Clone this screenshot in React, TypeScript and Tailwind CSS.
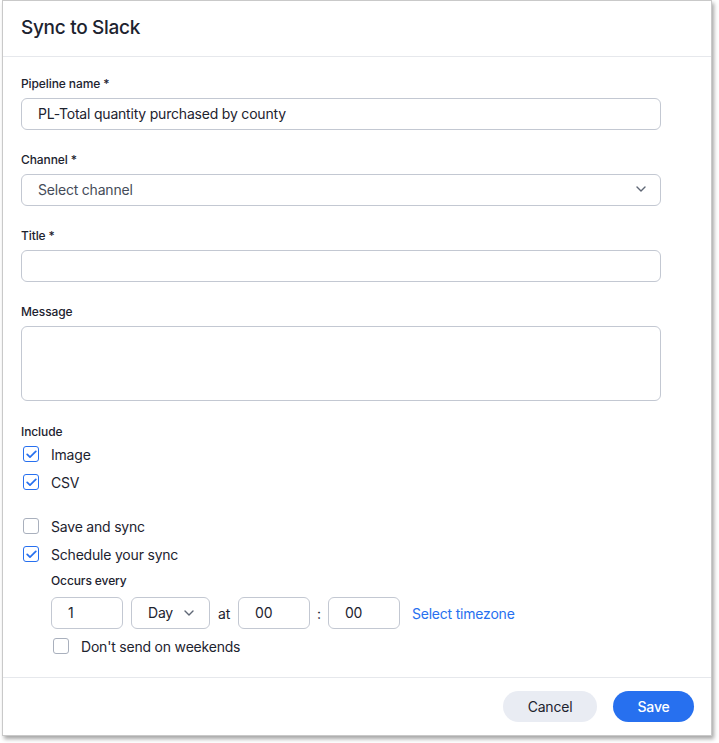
import React from "react";

const font = { fontFamily: "Inter, 'Noto Sans', sans-serif" };

function Check({ checked }: { checked: boolean }) {
  return checked ? (
    <div className="w-4 h-4 rounded-[3px] border-[1.5px] border-[#2770ef] flex items-center justify-center bg-white">
      <svg width="11" height="9" viewBox="0 0 11 9" fill="none">
        <path d="M1.2 4.4 L4 7.2 L9.8 1.4" stroke="#2770ef" strokeWidth="1.7" strokeLinecap="round" strokeLinejoin="round" />
      </svg>
    </div>
  ) : (
    <div className="w-4 h-4 rounded-[3px] border border-[#a9b0bd] bg-white" />
  );
}

function Chevron() {
  return (
    <svg width="10" height="6" viewBox="0 0 10 6" fill="none">
      <path d="M1 1 L5 5 L9 1" stroke="#5f6775" strokeWidth="1.4" strokeLinecap="round" strokeLinejoin="round" />
    </svg>
  );
}

function Label({ children }: { children: React.ReactNode }) {
  return <div className="text-[12px] leading-4 font-medium text-[#1d232f] mb-[6px] tracking-[-0.1px]">{children}</div>;
}

const txt = "text-[14px] tracking-[-0.2px] text-[#1d232f]";
const boxCls = "w-[640px] h-8 rounded-[6px] border border-[#c3c8d2] bg-white flex items-center px-4 pb-[2px] " + txt;

export default function App() {
  return (
    <div className="bg-white w-[719px] h-[743px]" style={font}>
      <div className="ml-[2px] w-[710px] h-[736px] bg-white border border-[#c9c9c9] shadow-[2px_3px_4px_rgba(0,0,0,0.35)] flex flex-col">
        <div className="h-[56px] border-b border-[#e6e8ec] flex items-center pl-[18px]">
          <h1 className="text-[19px] font-medium text-[#1d232f] tracking-[-0.3px]">Sync to Slack</h1>
        </div>
        <div className="flex-1 pl-[18px] pt-[19px]">
          <div>
            <Label>Pipeline name *</Label>
            <div className={boxCls}>PL-Total quantity purchased by county</div>
          </div>
          <div className="mt-[22px]">
            <Label>Channel *</Label>
            <div className={boxCls + " justify-between"}>
              <span className="text-[#454c59]">Select channel</span>
              <span className="mr-[-2px]"><Chevron /></span>
            </div>
          </div>
          <div className="mt-[22px]">
            <Label>Title *</Label>
            <div className={boxCls}></div>
          </div>
          <div className="mt-[22px]">
            <Label>Message</Label>
            <div className="w-[640px] h-[75px] rounded-[6px] border border-[#c3c8d2] bg-white"></div>
          </div>
          <div className="mt-[23px]">
            <div className="text-[12px] leading-4 font-medium text-[#1d232f] tracking-[-0.1px]">Include</div>
            <div className="mt-[6px] flex flex-col gap-3 pl-[2px]">
              <div className="flex items-center gap-3 h-4">
                <Check checked />
                <span className={txt}>Image</span>
              </div>
              <div className="flex items-center gap-3 h-4">
                <Check checked />
                <span className={txt}>CSV</span>
              </div>
            </div>
          </div>
          <div className="mt-7 flex flex-col gap-3 pl-[2px]">
            <div className="flex items-center gap-3 h-4">
              <Check checked={false} />
              <span className={txt}>Save and sync</span>
            </div>
            <div className="flex items-center gap-3 h-4">
              <Check checked />
              <span className={txt}>Schedule your sync</span>
            </div>
          </div>
          <div className="pl-[30px] mt-[11px]">
            <div className="text-[12px] leading-4 font-medium text-[#1d232f] tracking-[-0.1px]">Occurs every</div>
            <div className={"mt-[8px] flex items-center " + txt}>
              <div className="w-[72px] h-8 rounded-[6px] border border-[#c3c8d2] flex items-center pl-4 pb-[1px]">1</div>
              <div className="ml-2 w-[79px] h-8 rounded-[6px] border border-[#c3c8d2] flex items-center pl-4 gap-[11px] pb-[1px]">
                <span>Day</span>
                <Chevron />
              </div>
              <span className="ml-2">at</span>
              <div className="ml-[8px] w-[72px] h-8 rounded-[6px] border border-[#c3c8d2] flex items-center pl-4 pb-[1px]">00</div>
              <span className="ml-[7px]">:</span>
              <div className="ml-[7px] w-[72px] h-8 rounded-[6px] border border-[#c3c8d2] flex items-center pl-4 pb-[1px]">00</div>
              <span className="ml-3 text-[#2770ef]">Select timezone</span>
            </div>
            <div className="mt-[9px] flex items-center gap-3 h-4 pl-[2px]">
              <Check checked={false} />
              <span className={txt}>Don't send on weekends</span>
            </div>
          </div>
        </div>
        <div className="h-[58px] border-t border-[#e6e8ec] flex items-start justify-end pt-[13px] pr-[17px] gap-4">
          <button className={"w-[94px] h-[31px] rounded-full bg-[#e9ecf3] " + txt}>Cancel</button>
          <button className="w-[81px] h-[31px] rounded-full bg-[#2770ef] text-[14px] tracking-[-0.2px] font-medium text-white">Save</button>
        </div>
      </div>
    </div>
  );
}
